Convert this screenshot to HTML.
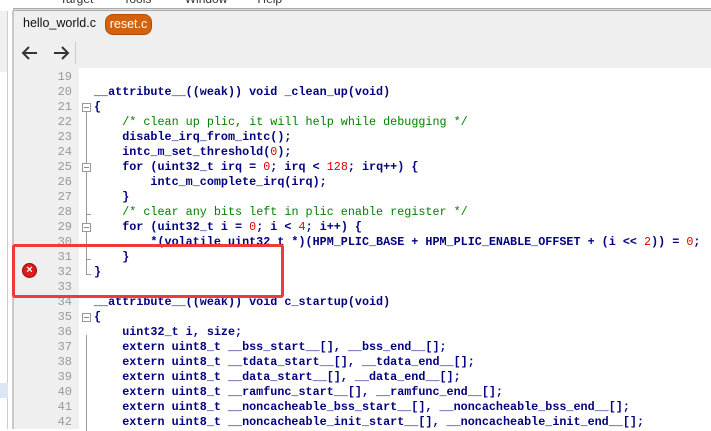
<!DOCTYPE html>
<html><head><meta charset="utf-8"><style>
*{margin:0;padding:0;box-sizing:border-box}
body{width:711px;height:429px;overflow:hidden;background:#fff;position:relative;font-family:"Liberation Sans",sans-serif}
.a{position:absolute}
.ln{position:absolute;left:20px;width:52px;text-align:right;font:12px "Liberation Mono",monospace;color:#999;line-height:15px}
.c{position:absolute;left:94px;font:bold 11.75px "Liberation Mono",monospace;color:#000080;line-height:15px;white-space:pre}
.g{color:#008000;font-weight:normal}
.n{color:#e00000;font-weight:normal}
.fb{position:absolute;left:82px;width:9px;height:9px;border:1px solid #999;background:#fff}
.fb:after{content:"";position:absolute;left:1px;top:3px;width:5px;height:1px;background:#888}
</style></head><body>
<div class="a" style="left:0;top:0;width:711px;height:8px;background:#fff"></div>
<div class="a" style="left:60px;top:-8px;font-size:12px;color:#333">Target &nbsp;&nbsp;&nbsp;&nbsp;&nbsp;&nbsp;&nbsp;&nbsp;Tools &nbsp;&nbsp;&nbsp;&nbsp;&nbsp;&nbsp;&nbsp;&nbsp;&nbsp;Window &nbsp;&nbsp;&nbsp;&nbsp;&nbsp;&nbsp;&nbsp;&nbsp;Help</div>
<div class="a" style="left:13px;top:8px;width:698px;height:3px;border-top:1px solid #aaa;border-bottom:1px solid #aaa;background:#ddd"></div>
<div class="a" style="left:13px;top:11px;width:698px;height:57px;background:#efefef"></div>
<div class="a" style="left:0;top:11px;width:8px;height:418px;background:#f0f0f0;border-right:1px solid #ccc"></div>
<div class="a" style="left:0;top:72px;width:7px;height:357px;background:#fff"></div>
<div class="a" style="left:0;top:383px;width:8px;height:15px;background:#dde6f7"></div>
<div class="a" style="left:12px;top:11px;width:2px;height:418px;background:#c8c8c8"></div>
<div class="a" style="left:23px;top:16px;font-size:12.5px;color:#111">hello_world.c</div>
<div class="a" style="left:105px;top:14px;width:47px;height:21px;border-radius:8px;background:#d2620e;border:1px solid #b04e08;color:#fff;font-size:12.5px;text-align:center;line-height:19px">reset.c</div>
<svg class="a" style="left:20px;top:44px" width="60" height="18" viewBox="0 0 60 18"><g fill="none" stroke="#333" stroke-width="2"><path d="M3 9H17M9 3L3 9L9 15"/><path d="M34 9H48M42 3L48 9L42 15"/></g></svg>
<div class="a" style="left:75px;top:42px;width:1px;height:22px;background:#ccc"></div>
<div class="a" style="left:14px;top:68px;width:65px;height:361px;background:#efefef"></div>
<div class="a" style="left:86px;top:110px;width:1px;height:164px;background:#999"></div>
<div class="a" style="left:86px;top:335px;width:1px;height:96px;background:#999"></div>
<div class="a" style="left:86px;top:214px;width:5px;height:1px;background:#999"></div>
<div class="a" style="left:86px;top:259px;width:5px;height:1px;background:#999"></div>
<div class="a" style="left:86px;top:274px;width:5px;height:1px;background:#999"></div>
<div class="fb" style="top:103px"></div>
<div class="fb" style="top:163px"></div>
<div class="fb" style="top:223px"></div>
<div class="fb" style="top:313px"></div>

<div class="ln" style="top:70px">19<br>20<br>21<br>22<br>23<br>24<br>25<br>26<br>27<br>28<br>29<br>30<br>31<br>32<br>33<br>34<br>35<br>36<br>37<br>38<br>39<br>40<br>41<br>42</div>
<div class="c" style="top:70px">
__attribute__((weak)) void _clean_up(void)
{
    <span class="g">/* clean up plic, it will help while debugging */</span>
    disable_irq_from_intc();
    intc_m_set_threshold(<span class="n">0</span>);
    for (uint32_t irq = <span class="n">0</span>; irq &lt; <span class="n">128</span>; irq++) {
        intc_m_complete_irq(irq);
    }
    <span class="g">/* clear any bits left in plic enable register */</span>
    for (uint32_t i = <span class="n">0</span>; i &lt; <span class="n">4</span>; i++) {
        *(volatile uint32_t *)(HPM_PLIC_BASE + HPM_PLIC_ENABLE_OFFSET + (i &lt;&lt; <span class="n">2</span>)) = <span class="n">0</span>;
    }
}

__attribute__((weak)) void c_startup(void)
{
    uint32_t i, size;
    extern uint8_t __bss_start__[], __bss_end__[];
    extern uint8_t __tdata_start__[], __tdata_end__[];
    extern uint8_t __data_start__[], __data_end__[];
    extern uint8_t __ramfunc_start__[], __ramfunc_end__[];
    extern uint8_t __noncacheable_bss_start__[], __noncacheable_bss_end__[];
    extern uint8_t __noncacheable_init_start__[], __noncacheable_init_end__[];
</div>
<div class="a" style="left:12px;top:244px;width:272px;height:54px;border:3px solid #ee3a3a;border-radius:3px"></div>
<div class="a" style="left:22px;top:263px;width:15px;height:15px;border-radius:50%;background:#d81e1e;border:1px solid #a00;color:#fff;font:bold 11px/13px 'Liberation Sans',sans-serif;text-align:center">&#215;</div>
</body></html>
